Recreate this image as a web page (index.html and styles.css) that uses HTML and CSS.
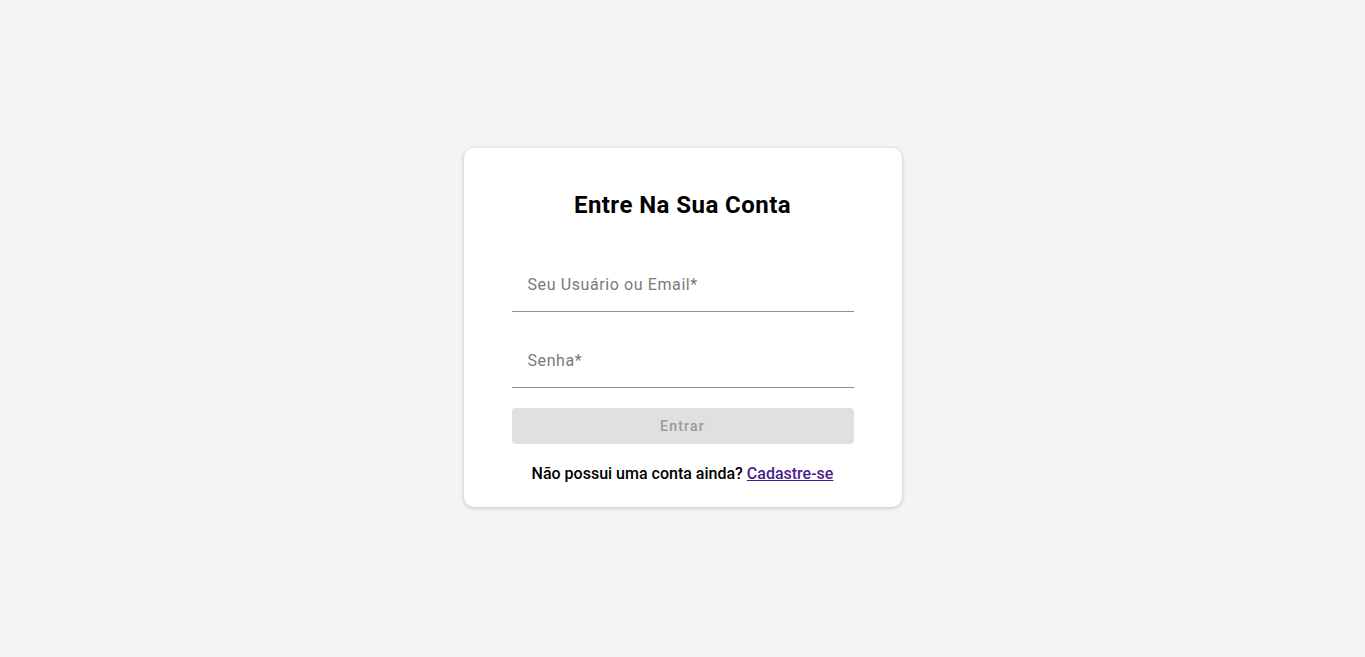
FILE: index.html
```html
<!DOCTYPE html>
<html lang="pt-BR">
<head>
<meta charset="utf-8">
<title>Entre Na Sua Conta</title>
<link rel="stylesheet" href="styles.css">
</head>
<body>
<main class="page">
  <form class="card">
    <h1 class="title">Entre Na Sua Conta</h1>
    <div class="field">
      <label class="field-label">Seu Usuário ou Email*</label>
      <input class="field-input" type="text" aria-label="Seu Usuário ou Email">
    </div>
    <div class="field">
      <label class="field-label">Senha*</label>
      <input class="field-input" type="password" aria-label="Senha">
    </div>
    <button class="btn" type="button" disabled>Entrar</button>
    <p class="signup">Não possui uma conta ainda? <a class="signup-link" href="#">Cadastre-se</a></p>
  </form>
</main>
</body>
</html>
```

FILE: styles.css
```css
* { box-sizing: border-box; }
html, body {
  margin: 0;
  padding: 0;
  height: 100%;
}
body {
  background: #f4f4f4;
  font-family: Roboto, "Liberation Sans", Arial, sans-serif;
  color: #000;
}
.page {
  min-height: 100%;
  display: flex;
  align-items: flex-start;
  justify-content: center;
  padding-top: 148px;
}
.card {
  width: 438px;
  background: #fff;
  border-radius: 10px;
  box-shadow: 0 1px 4px rgba(0, 0, 0, 0.22);
  padding: 41px 48px 23px;
  display: flex;
  flex-direction: column;
}
.title {
  margin: 0 0 35px;
  font-size: 24px;
  line-height: 32px;
  font-weight: 700;
  letter-spacing: 0.45px;
  text-align: center;
}
.field {
  position: relative;
  height: 56px;
  border-bottom: 1px solid #8c8c8c;
  margin-bottom: 20px;
}
.field-label {
  position: absolute;
  left: 16px;
  top: 19px;
  font-size: 16px;
  line-height: 20px;
  letter-spacing: 0.6px;
  color: #7a7a7a;
  pointer-events: none;
}
.field-input {
  width: 100%;
  height: 100%;
  border: 0;
  background: transparent;
  outline: none;
  padding: 25px 16px 8px;
  font: inherit;
  font-size: 16px;
}
.btn {
  height: 36px;
  border: 0;
  border-radius: 4px;
  background: #e0e0e0;
  color: #9a9a9a;
  font-family: inherit;
  font-size: 14px;
  font-weight: 500;
  letter-spacing: 1.25px;
  cursor: default;
}
.signup {
  margin: 20px 0 0;
  font-size: 16px;
  line-height: 20px;
  font-weight: 500;
  text-align: center;
}
.signup-link {
  color: #4b1d8c;
  text-decoration: underline;
}
```
